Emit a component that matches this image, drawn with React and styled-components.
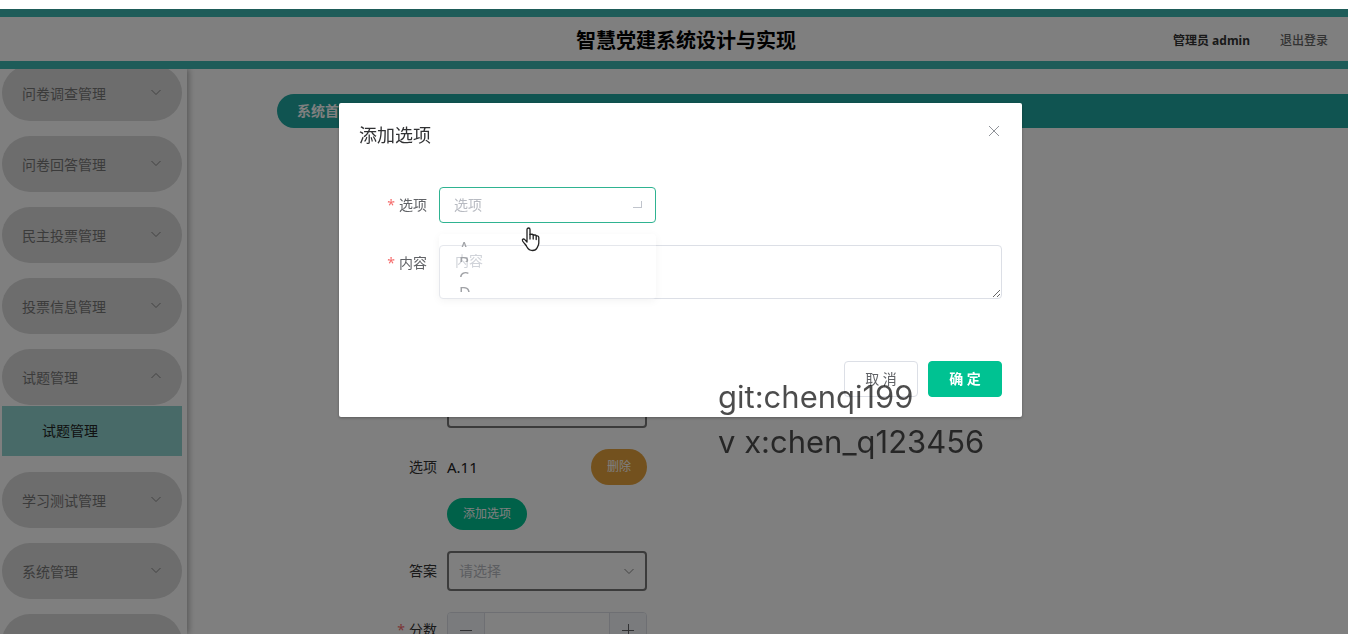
import React from "react";
import styled, { createGlobalStyle } from "styled-components";

const GlobalStyle = createGlobalStyle`
  *, *::before, *::after { box-sizing: border-box; }
  body {
    margin: 0;
    background: #fff;
    color: #333;
    font: 14px/20px "Noto Sans", "Noto Sans CJK SC", sans-serif;
  }
  button, input, select, textarea { font: inherit; color: inherit; margin: 0; }
  ul { list-style: none; margin: 0; padding: 0; }
`;

const Shell = styled.div`
  display: flex;
  flex-direction: column;
  height: 100vh;
  padding-top: 9px;
  overflow: hidden;
`;

const Header = styled.header`
  display: grid;
  grid-template-columns: 1fr auto 1fr;
  align-items: center;
  flex: none;
  height: 60px;
  padding: 3px 0 0 24px;
  border: solid #3cb8b2;
  border-width: 8px 0;
`;

const SiteTitle = styled.h1`
  grid-column: 2;
  margin: 0;
  font-size: 20px;
  line-height: 28px;
  font-weight: 700;
  color: #000;
`;

const UserBar = styled.div`
  display: flex;
  justify-content: flex-end;
  gap: 30px;
  padding-right: 20px;
  font-size: 12px;
  font-weight: 700;
`;

const UserName = styled.span`
  &::first-line { color: #333; }
`;

const LogoutLink = styled.a`
  color: #666;
  font-weight: 500;
  text-decoration: none;
`;

const Columns = styled.div`
  display: flex;
  flex: 1;
  min-height: 0;
`;

const Sidebar = styled.nav`
  flex: none;
  width: 187px;
  overflow: hidden;
  clip-path: inset(0 -12px 0 0);
  box-shadow: 2px 0 6px rgba(0, 0, 0, 0.3);
`;

const MenuList = styled.ul`
  display: flex;
  flex-direction: column;
  gap: 15px;
  margin-top: -4px;
  padding: 0 5px 0 2px;
`;

const MenuButton = styled.button`
  display: flex;
  align-items: center;
  justify-content: space-between;
  width: 100%;
  height: 56px;
  padding: 2px 20px 0;
  border: 0;
  border-radius: 30px;
  background: #dadada;
  color: #777;
  svg { margin-top: -4px; }
`;

const SubLink = styled.a`
  display: block;
  height: 50px;
  margin: 1px 0;
  padding-left: 40px;
  background: #90d4d0;
  color: #222;
  line-height: 50px;
  text-decoration: none;
`;

const Main = styled.main`
  flex: 1;
  min-width: 0;
  padding: 25px 0 0 90px;
`;

const Crumbs = styled.div`
  height: 34px;
  padding-left: 20px;
  border-radius: 17px 0 0 17px;
  background: #20a8a2;
  color: #fff;
  font-weight: 700;
  line-height: 34px;
`;

const PageForm = styled.form`
  display: flex;
  flex-direction: column;
  gap: 21px;
  width: 370px;
  margin-top: 260px;
`;

const PageRow = styled.div`
  display: grid;
  grid-template-columns: 160px 200px;
  column-gap: 10px;
  align-items: center;
  row-gap: 13px;
`;

const PageLabel = styled.label`
  text-align: right;
  color: #333;
`;

const Star = styled.span`
  margin-right: 4px;
  color: #f56c6c;
`;

const PageInput = styled.input`
  width: 100%;
  height: 40px;
  border: 2px solid #777;
  border-radius: 4px;
  background: #fff;
`;

const OptionLine = styled.div`
  display: flex;
  align-items: center;
  justify-content: space-between;
  color: #222;
  font-size: 15px;
`;

const PillButton = styled.button`
  justify-self: start;
  width: ${(p) => p.$width}px;
  height: ${(p) => p.$height}px;
  padding: 0;
  border: 0;
  border-radius: 18px;
  background: ${(p) => p.$color};
  color: #fff;
  font-size: 12px;
`;

const SelectBox = styled.div`
  display: grid;
  align-items: center;
  width: ${(p) => p.$width}px;
  > * { grid-area: 1 / 1; }
  svg {
    justify-self: end;
    margin-right: 12px;
    pointer-events: none;
  }
`;

const Select = styled.select`
  width: 100%;
  height: ${(p) => (p.$focused ? 36 : 40)}px;
  padding: ${(p) => (p.$focused ? "0 14px" : "0 10px")};
  border: ${(p) => (p.$focused ? "1px solid #2fb391" : "2px solid #777")};
  border-radius: 4px;
  background: #fff;
  color: #b8bbc2;
  appearance: none;
  outline: none;
`;

const Stepper = styled.div`
  display: flex;
  height: 36px;
  border: 1px solid #dcdfe6;
  border-radius: 4px;
  overflow: hidden;
`;

const StepButton = styled.button`
  display: grid;
  place-items: center;
  width: 36px;
  padding: 0;
  border: 0;
  background: #f5f7fa;
  color: #606266;
`;

const StepInput = styled.input`
  flex: 1;
  min-width: 0;
  border: solid #dcdfe6;
  border-width: 0 1px;
  background: #fff;
`;

const Overlay = styled.div`
  position: fixed;
  inset: 9px 0 0 0;
  padding: 94px 0 0 13px;
  background: rgba(0, 0, 0, 0.5);
`;

const Dialog = styled.section`
  width: 683px;
  max-width: 100%;
  margin: 0 auto;
  border-radius: 2px;
  background: #fff;
  box-shadow: 0 1px 3px rgba(0, 0, 0, 0.3);
`;

const DialogHead = styled.header`
  display: flex;
  justify-content: space-between;
  padding: 20px 20px 10px;
`;

const DialogTitle = styled.h2`
  margin: 0;
  color: #303133;
  font-size: 18px;
  font-weight: 400;
  line-height: 24px;
`;

const CloseButton = styled.button`
  display: grid;
  place-items: center;
  width: 16px;
  height: 16px;
  padding: 0;
  border: 0;
  background: none;
  color: #909399;
`;

const DialogForm = styled.form`
  display: flex;
  flex-direction: column;
  gap: 22px;
  padding: 30px 20px 52px;
`;

const DialogRow = styled.div`
  display: grid;
  grid-template-columns: 68px 1fr;
  column-gap: 12px;
`;

const DialogLabel = styled.label`
  color: #606266;
  line-height: 36px;
  text-align: right;
`;

const Anchor = styled.div`
  position: relative;
`;

const TextArea = styled.textarea`
  display: block;
  width: 100%;
  height: 54px;
  padding: 5px 15px;
  border: 1px solid #dcdfe6;
  border-radius: 4px;
  outline: none;
  resize: vertical;
  &::placeholder { color: #c0c4cc; opacity: 1; }
`;

const FloatLayer = styled.div`
  position: absolute;
  top: -58px;
  left: 0;
  pointer-events: none;
`;

const DropDown = styled.ul`
  position: absolute;
  top: 47px;
  left: 0;
  display: flex;
  flex-direction: column;
  gap: 9px;
  width: 217px;
  height: 65px;
  padding: 7px 20px;
  border-radius: 4px;
  background: rgba(255, 255, 255, 0.25);
  box-shadow: 0 2px 8px rgba(0, 0, 0, 0.05);
  color: #a0a2a6;
`;

const DropOption = styled.li`
  height: 6px;
  overflow: hidden;
  font-size: 16px;
  line-height: 14px;
`;

const Pointer = styled.svg`
  position: absolute;
  top: 40px;
  left: 82px;
`;

const DialogFoot = styled.footer`
  display: flex;
  justify-content: flex-end;
  gap: 10px;
  padding: 10px 20px 20px;
`;

const DialogButton = styled.button`
  width: 74px;
  height: 36px;
  padding: 0;
  border: 1px solid ${(p) => (p.$primary ? "#00c292" : "#dcdfe6")};
  border-radius: 4px;
  background: ${(p) => (p.$primary ? "#00c292" : "#fff")};
  color: ${(p) => (p.$primary ? "#fff" : "#606266")};
  font-weight: ${(p) => (p.$primary ? 700 : 400)};
`;

const Watermark = styled.div`
  position: fixed;
  top: 374px;
  left: 718px;
  color: rgba(0, 0, 0, 0.7);
  font: 400 31px/45px Inter, sans-serif;
  white-space: pre;
  pointer-events: none;
`;

const Chevron = ({ up = false }) => (
  <svg width="12" height="12" viewBox="0 0 12 12" fill="none" stroke="#888" aria-hidden="true">
    <path d={up ? "M1.5 8 6 3.5 10.5 8" : "M1.5 4 6 8.5 10.5 4"} />
  </svg>
);

const menu = [
  { name: "问卷调查管理" },
  { name: "问卷回答管理" },
  { name: "民主投票管理" },
  { name: "投票信息管理" },
  { name: "试题管理", open: true, children: ["试题管理"] },
  { name: "学习测试管理" },
  { name: "系统管理" },
  { name: "" },
];

export default function App() {
  return (
    <>
      <GlobalStyle />
      <Shell>
        <Header>
          <SiteTitle>智慧党建系统设计与实现</SiteTitle>
          <UserBar>
            <UserName>管理员 admin</UserName>
            <LogoutLink href="#logout">退出登录</LogoutLink>
          </UserBar>
        </Header>
        <Columns>
          <Sidebar>
            <MenuList>
              {menu.map((item, i) => (
                <li key={i}>
                  <MenuButton type="button">
                    {item.name}
                    <Chevron up={item.open} />
                  </MenuButton>
                  {item.children?.map((child) => (
                    <SubLink key={child} href="#questions">{child}</SubLink>
                  ))}
                </li>
              ))}
            </MenuList>
          </Sidebar>
          <Main>
            <Crumbs>系统首页</Crumbs>
            <PageForm>
              <PageRow>
                <span />
                <PageInput type="text" />
              </PageRow>
              <PageRow>
                <PageLabel as="span">选项</PageLabel>
                <OptionLine>
                  <span>A.11</span>
                  <PillButton type="button" $width={56} $height={36} $color="#e6a23c">删除</PillButton>
                </OptionLine>
                <span />
                <PillButton type="button" $width={80} $height={32} $color="#00c292">添加选项</PillButton>
              </PageRow>
              <PageRow>
                <PageLabel htmlFor="answer">答案</PageLabel>
                <SelectBox $width={200}>
                  <Select id="answer" defaultValue="">
                    <option value="">请选择</option>
                  </Select>
                  <Chevron />
                </SelectBox>
              </PageRow>
              <PageRow>
                <PageLabel htmlFor="score"><Star>*</Star>分数</PageLabel>
                <Stepper>
                  <StepButton type="button" aria-label="减少">
                    <svg width="12" height="12" stroke="currentColor"><path d="M0 6.5h12" /></svg>
                  </StepButton>
                  <StepInput id="score" type="text" />
                  <StepButton type="button" aria-label="增加">
                    <svg width="12" height="12" stroke="currentColor"><path d="M0 6.5h12M6.5 0v12" /></svg>
                  </StepButton>
                </Stepper>
              </PageRow>
            </PageForm>
          </Main>
        </Columns>
      </Shell>
      <Overlay>
        <Dialog role="dialog" aria-labelledby="dialog-title">
          <DialogHead>
            <DialogTitle id="dialog-title">添加选项</DialogTitle>
            <CloseButton type="button" aria-label="关闭">
              <svg width="12" height="12" stroke="currentColor"><path d="M1 1l10 10M11 1L1 11" /></svg>
            </CloseButton>
          </DialogHead>
          <DialogForm>
            <DialogRow>
              <DialogLabel htmlFor="option"><Star>*</Star>选项</DialogLabel>
              <SelectBox $width={217}>
                <Select id="option" defaultValue="" $focused>
                  <option value="">选项</option>
                </Select>
                <svg width="12" height="12" fill="none" stroke="#c0c4cc" aria-hidden="true">
                  <path d="M1 8.5h8.5M9.5 2v7" />
                </svg>
              </SelectBox>
            </DialogRow>
            <DialogRow>
              <DialogLabel htmlFor="content"><Star>*</Star>内容</DialogLabel>
              <Anchor>
                <TextArea id="content" placeholder="内容" />
                <FloatLayer>
                  <DropDown>
                    {["A", "B", "C", "D"].map((o) => <DropOption key={o}>{o}</DropOption>)}
                  </DropDown>
                  <Pointer width="20" height="26" viewBox="0 0 20 26" fill="#fff" stroke="#222" strokeWidth="1.3" strokeLinejoin="round" strokeLinecap="round" aria-hidden="true">
                    <path d="M6 15V2.5a1.5 1.5 0 0 1 3 0V7.5l2.2-.3q.8.1 1 .8l2-.1q.8.2 1 .9l1.200 0q1.400.2 1.400 1.700V16c0 2-1 3.500-1.800 5c-.8 1.800-2.200 2.500-4.500 2.500c-3 0-4.500-1.500-5.500-3.500C5 17.500 3 16.500 1.600 14c-.8-1.800 1-2.600 2.200-1.400z" />
                    <path d="M9 7.5v4.500M12.200 8v4M15.200 9v3.500" />
                  </Pointer>
                </FloatLayer>
              </Anchor>
            </DialogRow>
          </DialogForm>
          <DialogFoot>
            <DialogButton type="button">取 消</DialogButton>
            <DialogButton type="button" $primary>确 定</DialogButton>
          </DialogFoot>
        </Dialog>
      </Overlay>
      <Watermark>{"git:chenqi199\nv x:chen_q123456"}</Watermark>
    </>
  );
}
